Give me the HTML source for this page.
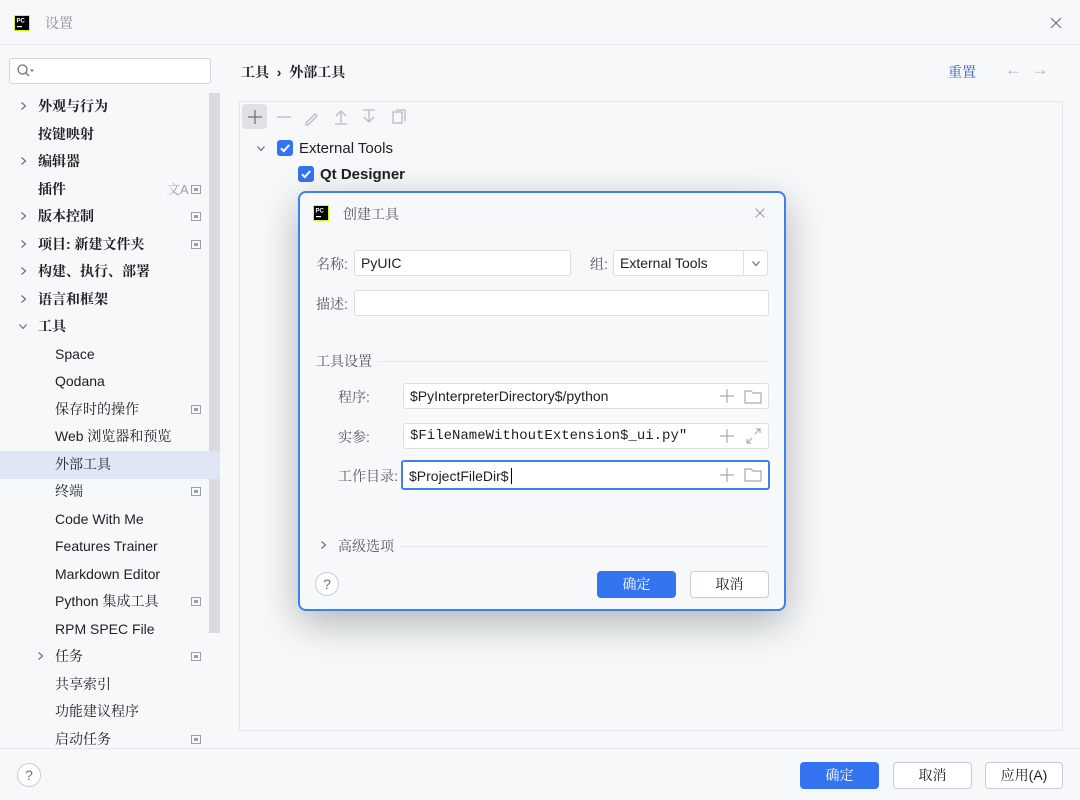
<!DOCTYPE html>
<html><head><meta charset="utf-8"><style>
*{box-sizing:border-box;margin:0;padding:0}
body{width:1080px;height:800px;background:#f7f8fa;font-family:"Liberation Sans","Noto Serif CJK SC",serif;font-size:14px;color:#1e1f22;position:relative;overflow:hidden}
.abs{position:absolute}
.cn{font-family:"Liberation Sans","Noto Serif CJK SC",serif}
.row{position:absolute;left:0;width:220px;height:27px;line-height:27px;font-size:14px}
.chev{position:absolute;top:8px}
.mini{position:absolute;left:191px;top:9px;width:10px;height:9px;border:1px solid #9a9ea8;}
.mini:after{content:"";position:absolute;left:2px;top:2px;width:4px;height:3px;background:#9a9ea8}
.inp{position:absolute;background:#fff;border:1px solid #dcdee3;border-radius:3px;height:26px;line-height:24px;padding-left:6px;font-size:14px}
.btn{position:absolute;height:27px;line-height:25px;text-align:center;border:1px solid #c9ccd6;border-radius:4px;background:#fff;font-size:14px}
.bp{background:#3574f0;border-color:#3574f0;color:#fff}
</style></head><body>
<svg width="0" height="0" style="position:absolute"><defs>
<symbol id="cr" viewBox="0 0 10 10"><path d="M3.5 1.5l4 3.5-4 3.5" fill="none" stroke="#6c707e" stroke-width="1.2"/></symbol>
<symbol id="cd" viewBox="0 0 10 10"><path d="M1.5 3.5l3.5 4 3.5-4" fill="none" stroke="#6c707e" stroke-width="1.2"/></symbol>
<symbol id="ck" viewBox="0 0 16 16"><rect width="16" height="16" rx="3" fill="#3574f0"/><path d="M4 8.3l2.8 2.8L12.2 5" fill="none" stroke="#fff" stroke-width="2"/></symbol>
<symbol id="x" viewBox="0 0 14 14"><path d="M2 2l10 10M12 2L2 12" stroke="#6c707e" stroke-width="1.2"/></symbol>
</defs></svg>
<!-- title bar -->
<div class="abs" style="left:0;top:0;width:1080px;height:45px;border-bottom:1px solid #e6e7ea"></div>
<svg class="abs" style="left:14px;top:15px" width="16" height="16"><rect width="16" height="16" fill="#d9f11c"/><rect x="1" y="1" width="14" height="14" fill="#000"/><text x="2.5" y="7.5" font-size="6" fill="#fff" font-family="Liberation Sans" font-weight="bold">PC</text><rect x="3" y="11" width="5" height="1.2" fill="#fff"/></svg>
<div class="abs cn" style="left:45px;top:13px;color:#8c8f96;font-size:14px">设置</div>
<svg class="abs" style="left:1049px;top:16px" width="14" height="14"><use href="#x"/></svg>
<!-- search -->
<div class="abs" style="left:9px;top:58px;width:202px;height:26px;background:#fff;border:1px solid #d3d5db;border-radius:3px"></div>
<svg class="abs" style="left:16px;top:63px" width="20" height="16"><circle cx="6.5" cy="6.5" r="4.5" fill="none" stroke="#6c707e" stroke-width="1.3"/><line x1="10" y1="10" x2="13" y2="13" stroke="#6c707e" stroke-width="1.3"/><path d="M14 6.5h4l-2 2.5z" fill="#6c707e"/></svg>
<!-- scrollbar -->
<div class="abs" style="left:209px;top:93px;width:11px;height:540px;background:#d9dbe0"></div>
<div class="abs" style="left:0;top:451px;width:220px;height:28px;background:#dfe6f5"></div>
<div class="cn">
<div class="row" style="top:93px"><svg class="chev" style="left:18px" width="10" height="10"><use href="#cr"/></svg><span class="abs" style="left:38px;font-weight:bold">外观与行为</span></div>
<div class="row" style="top:121px"><span class="abs" style="left:38px;font-weight:bold">按键映射</span></div>
<div class="row" style="top:148px"><svg class="chev" style="left:18px" width="10" height="10"><use href="#cr"/></svg><span class="abs" style="left:38px;font-weight:bold">编辑器</span></div>
<div class="row" style="top:176px"><span class="abs" style="left:38px;font-weight:bold">插件</span><span class="abs" style="left:167px;color:#9a9ea8;font-size:13px">文A</span><span class="mini"></span></div>
<div class="row" style="top:203px"><svg class="chev" style="left:18px" width="10" height="10"><use href="#cr"/></svg><span class="abs" style="left:38px;font-weight:bold">版本控制</span><span class="mini"></span></div>
<div class="row" style="top:231px"><svg class="chev" style="left:18px" width="10" height="10"><use href="#cr"/></svg><span class="abs" style="left:38px;font-weight:bold">项目: 新建文件夹</span><span class="mini"></span></div>
<div class="row" style="top:258px"><svg class="chev" style="left:18px" width="10" height="10"><use href="#cr"/></svg><span class="abs" style="left:38px;font-weight:bold">构建、执行、部署</span></div>
<div class="row" style="top:286px"><svg class="chev" style="left:18px" width="10" height="10"><use href="#cr"/></svg><span class="abs" style="left:38px;font-weight:bold">语言和框架</span></div>
<div class="row" style="top:313px"><svg class="chev" style="left:18px" width="10" height="10"><use href="#cd"/></svg><span class="abs" style="left:38px;font-weight:bold">工具</span></div>
<div class="row" style="top:341px"><span class="abs" style="left:55px">Space</span></div>
<div class="row" style="top:368px"><span class="abs" style="left:55px">Qodana</span></div>
<div class="row" style="top:396px"><span class="abs" style="left:55px">保存时的操作</span><span class="mini"></span></div>
<div class="row" style="top:423px"><span class="abs" style="left:55px">Web 浏览器和预览</span></div>
<div class="row" style="top:451px"><span class="abs" style="left:55px">外部工具</span></div>
<div class="row" style="top:478px"><span class="abs" style="left:55px">终端</span><span class="mini"></span></div>
<div class="row" style="top:506px"><span class="abs" style="left:55px">Code With Me</span></div>
<div class="row" style="top:533px"><span class="abs" style="left:55px">Features Trainer</span></div>
<div class="row" style="top:561px"><span class="abs" style="left:55px">Markdown Editor</span></div>
<div class="row" style="top:588px"><span class="abs" style="left:55px">Python 集成工具</span><span class="mini"></span></div>
<div class="row" style="top:616px"><span class="abs" style="left:55px">RPM SPEC File</span></div>
<div class="row" style="top:643px"><svg class="chev" style="left:35px" width="10" height="10"><use href="#cr"/></svg><span class="abs" style="left:55px">任务</span><span class="mini"></span></div>
<div class="row" style="top:671px"><span class="abs" style="left:55px">共享索引</span></div>
<div class="row" style="top:698px"><span class="abs" style="left:55px">功能建议程序</span></div>
<div class="row" style="top:726px"><span class="abs" style="left:55px">启动任务</span><span class="mini"></span></div>
</div>
<!-- right header -->
<div class="abs cn" style="left:241px;top:62px;font-weight:bold">工具 &nbsp;›&nbsp; 外部工具</div>
<div class="abs cn" style="left:948px;top:62px;color:#2f5fb8">重置</div>
<div class="abs" style="left:1005px;top:60px;color:#b0b3ba;font-size:17px">← &nbsp;→</div>
<!-- panel -->
<div class="abs" style="left:239px;top:101px;width:824px;height:630px;border:1px solid #e3e5e9"></div>
<div class="abs" style="left:242px;top:104px;width:25px;height:25px;background:#dfe1e5;border-radius:4px"></div>
<svg class="abs" style="left:246px;top:108px" width="170" height="18" fill="none" stroke="#b8bbc2" stroke-width="1.3"><path d="M9 2v14M2 9h14" stroke="#6c707e"/><path d="M31 9h14"/><path d="M60 15l9-9 2 2-9 9h-2z"/><path d="M95 3v12M90 8l5-5 5 5M89 16h12"/><path d="M123 2v12M118 9l5 5 5-5M117 2h12"/><rect x="147" y="4" width="9" height="11"/><path d="M150 2h9v11"/></svg>
<svg class="abs" style="left:256px;top:143px" width="10" height="10"><use href="#cd"/></svg>
<svg class="abs" style="left:277px;top:140px" width="16" height="16"><use href="#ck"/></svg>
<div class="abs" style="left:299px;top:140px;font-size:15px">External Tools</div>
<svg class="abs" style="left:298px;top:166px" width="16" height="16"><use href="#ck"/></svg>
<div class="abs" style="left:320px;top:166px;font-size:15px;font-weight:bold">Qt Designer</div>
<!-- bottom -->
<div class="abs" style="left:0;top:748px;width:1080px;height:1px;background:#e3e5e9"></div>
<div class="abs" style="left:17px;top:763px;width:24px;height:24px;border:1px solid #c9ccd6;border-radius:50%;text-align:center;line-height:22px;color:#6c707e;background:#fff">?</div>
<div class="btn bp cn" style="left:800px;top:762px;width:79px">确定</div>
<div class="btn cn" style="left:893px;top:762px;width:79px">取消</div>
<div class="btn cn" style="left:985px;top:762px;width:78px">应用(A)</div>
<!-- dialog -->
<div class="abs" style="left:298px;top:191px;width:488px;height:420px;background:#f7f8fa;border:2px solid #3d80ee;border-radius:8px;box-shadow:0 12px 40px rgba(0,0,0,.28)"></div>
<svg class="abs" style="left:313px;top:205px" width="16" height="16"><rect width="16" height="16" fill="#d9f11c"/><rect x="1" y="1" width="14" height="14" fill="#000"/><text x="2.5" y="7.5" font-size="6" fill="#fff" font-family="Liberation Sans" font-weight="bold">PC</text><rect x="3" y="11" width="5" height="1.2" fill="#fff"/></svg>
<div class="abs cn" style="left:343px;top:204px;color:#55585e">创建工具</div>
<svg class="abs" style="left:754px;top:207px" width="12" height="12" viewBox="0 0 14 14"><path d="M2 2l10 10M12 2L2 12" stroke="#9a9ea8" stroke-width="1.3"/></svg>
<div class="abs cn" style="left:316px;top:254px;color:#55585e">名称:</div>
<div class="inp" style="left:354px;top:250px;width:217px">PyUIC</div>
<div class="abs cn" style="left:590px;top:254px;color:#55585e">组:</div>
<div class="inp" style="left:613px;top:250px;width:155px">External Tools</div>
<div class="abs" style="left:743px;top:251px;width:1px;height:24px;background:#dcdee3"></div>
<svg class="abs" style="left:751px;top:258px" width="10" height="10"><use href="#cd"/></svg>
<div class="abs cn" style="left:316px;top:294px;color:#55585e">描述:</div>
<div class="inp" style="left:354px;top:290px;width:415px"></div>
<div class="abs cn" style="left:316px;top:351px;color:#55585e">工具设置</div>
<div class="abs" style="left:378px;top:361px;width:391px;height:1px;background:#e6e7ea"></div>
<div class="abs cn" style="left:338px;top:387px;color:#55585e">程序:</div>
<div class="inp" style="left:403px;top:383px;width:366px">$PyInterpreterDirectory$/python</div>
<div class="abs cn" style="left:338px;top:427px;color:#55585e">实参:</div>
<div class="inp" style="left:403px;top:423px;width:366px;font-family:'Liberation Mono';font-size:14px">$FileNameWithoutExtension$_ui.py"</div>
<div class="abs cn" style="left:338px;top:466px;color:#55585e">工作目录:</div>
<div class="inp" style="left:401px;top:460px;width:369px;height:30px;line-height:28px;border:2px solid #3d80ee">$ProjectFileDir$<span style="border-left:1px solid #000;margin-left:2px"></span></div>
<svg class="abs" style="left:718px;top:387px" width="46" height="100" fill="none" stroke="#a8abb2" stroke-width="1.2"><path d="M9 2v14M2 9h14"/><path d="M27 4h6l2 2h8v10H27z"/><path d="M9 42v14M2 49h14"/><path d="M29 56l5-5M29 52v4h4M42 42l-5 5M42 46v-4h-4"/><path d="M9 81v14M2 88h14"/><path d="M27 82h6l2 2h8v10H27z"/></svg>
<svg class="abs" style="left:318px;top:540px" width="10" height="10"><use href="#cr"/></svg>
<div class="abs cn" style="left:338px;top:536px;color:#55585e">高级选项</div>
<div class="abs" style="left:400px;top:546px;width:369px;height:1px;background:#e6e7ea"></div>
<div class="abs" style="left:315px;top:572px;width:24px;height:24px;border:1px solid #c9ccd6;border-radius:50%;text-align:center;line-height:22px;color:#6c707e;background:#fff">?</div>
<div class="btn bp cn" style="left:597px;top:571px;width:79px">确定</div>
<div class="btn cn" style="left:690px;top:571px;width:79px">取消</div>
</body></html>
